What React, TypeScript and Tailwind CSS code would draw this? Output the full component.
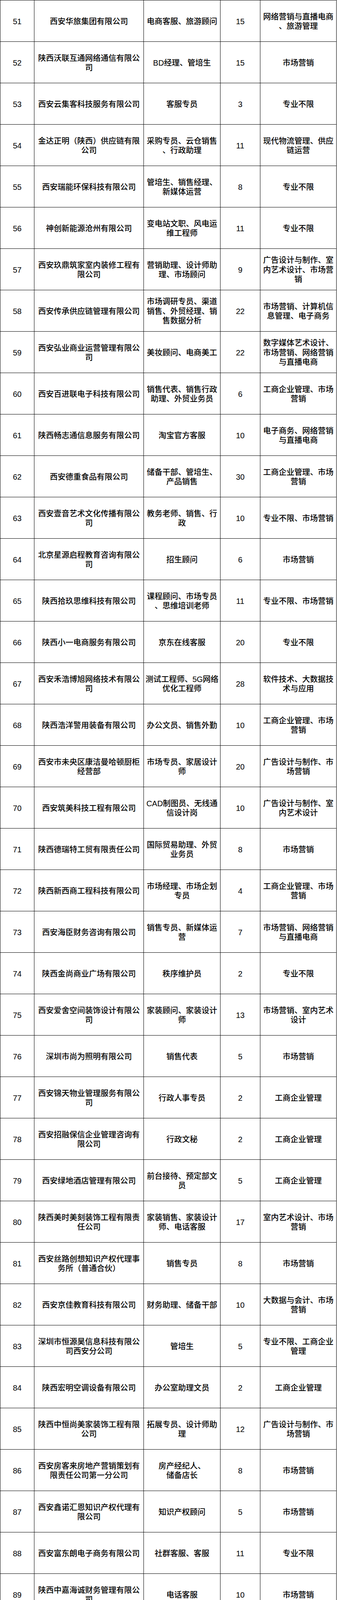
const ROWS: string[][] = [
  ['51', '西安华旅集团有限公司', '电商客服、旅游顾问', '15', '网络营销与直播电商|、旅游管理'],
  ['52', '陕西沃联互通网络通信有限公|司', 'BD经理、管培生', '15', '市场营销'],
  ['53', '西安云集客科技服务有限公司', '客服专员', '3', '专业不限'],
  ['54', '金达正明（陕西）供应链有限|公司', '采购专员、云仓销售|、行政助理', '11', '现代物流管理、供应|链运营'],
  ['55', '西安瑞能环保科技有限公司', '管培生、销售经理、|新媒体运营', '8', '专业不限'],
  ['56', '神创新能源沧州有限公司', '变电站文职、风电运|维工程师', '11', '专业不限'],
  ['57', '西安玖鼎筑家室内装修工程有|限公司', '营销助理、设计师助|理、市场顾问', '9', '广告设计与制作、室|内艺术设计、市场营|销'],
  ['58', '西安传承供应链管理有限公司', '市场调研专员、渠道|销售、外贸经理、销|售数据分析', '22', '市场营销、计算机信|息管理、电子商务'],
  ['59', '西安弘业商业运营管理有限公|司', '美妆顾问、电商美工', '22', '数字媒体艺术设计、|市场营销、网络营销|与直播电商'],
  ['60', '西安百进联电子科技有限公司', '销售代表、销售行政|助理、外贸业务员', '6', '工商企业管理、市场|营销'],
  ['61', '陕西畅志通信息服务有限公司', '淘宝官方客服', '10', '电子商务、网络营销|与直播电商'],
  ['62', '西安德重食品有限公司', '储备干部、管培生、|产品销售', '30', '工商企业管理、市场|营销'],
  ['63', '西安壹音艺术文化传播有限公|司', '教务老师、销售、行|政', '10', '专业不限、市场营销'],
  ['64', '北京星源启程教育咨询有限公|司', '招生顾问', '6', '市场营销'],
  ['65', '陕西拾玖思维科技有限公司', '课程顾问、市场专员|、思维培训老师', '11', '专业不限、市场营销'],
  ['66', '陕西小一电商服务有限公司', '京东在线客服', '20', '专业不限'],
  ['67', '西安禾浩博旭网络技术有限公|司', '测试工程师、5G网络|优化工程师', '28', '软件技术、大数据技|术与应用'],
  ['68', '陕西浩洋警用装备有限公司', '办公文员、销售外勤', '10', '工商企业管理、市场|营销'],
  ['69', '西安市未央区康洁曼哈顿厨柜|经营部', '市场专员、家居设计|师', '20', '广告设计与制作、市|场营销'],
  ['70', '西安筑美科技工程有限公司', 'CAD制图员、无线通|信设计岗', '10', '广告设计与制作、室|内艺术设计'],
  ['71', '陕西德瑞特工贸有限责任公司', '国际贸易助理、外贸|业务员', '8', '市场营销'],
  ['72', '陕西新西商工程科技有限公司', '市场经理、市场企划|专员', '4', '工商企业管理、市场|营销'],
  ['73', '西安海臣财务咨询有限公司', '销售专员、新媒体运|营', '7', '市场营销、网络营销|与直播电商'],
  ['74', '陕西金尚商业广场有限公司', '秩序维护员', '2', '专业不限'],
  ['75', '西安爱舍空间装饰设计有限公|司', '家装顾问、家装设计|师', '13', '市场营销、室内艺术|设计'],
  ['76', '深圳市尚为照明有限公司', '销售代表', '5', '市场营销'],
  ['77', '西安锦天物业管理服务有限公|司', '行政人事专员', '2', '工商企业管理'],
  ['78', '西安招融保信企业管理咨询有|限公司', '行政文秘', '2', '工商企业管理'],
  ['79', '西安绿地酒店管理有限公司', '前台接待、预定部文|员', '5', '工商企业管理'],
  ['80', '陕西美时美刻装饰工程有限责|任公司', '家装销售、家装设计|师、电话客服', '17', '室内艺术设计、市场|营销'],
  ['81', '西安丝路创想知识产权代理事|务所（普通合伙）', '销售专员', '8', '市场营销'],
  ['82', '西安京佳教育科技有限公司', '财务助理、储备干部', '10', '大数据与会计、市场|营销'],
  ['83', '深圳市恒源昊信息科技有限公|司西安分公司', '管培生', '5', '专业不限、工商企业|管理'],
  ['84', '陕西宏明空调设备有限公司', '办公室助理文员', '2', '工商企业管理'],
  ['85', '陕西中恒尚美家装饰工程有限|公司', '拓展专员、设计师助|理', '12', '广告设计与制作、市|场营销'],
  ['86', '西安房客来房地产营销策划有|限责任公司第一分公司', '房产经纪人、|储备店长', '8', '市场营销'],
  ['87', '西安鑫诺汇恩知识产权代理有|限公司', '知识产权顾问', '5', '市场营销'],
  ['88', '西安富东朗电子商务有限公司', '社群客服、客服', '11', '专业不限'],
  ['89', '陕西中嘉海诚财务管理有限公|司', '电话客服', '10', '市场营销'],
  ['90', '沈阳融联商务服务有限公司西|安分公司', '银行管培生', '10', '工商企业管理'],
  ['91', '西安元邦机电设备有限公司', '软件测试员、软件测|试工程师', '8', '软件技术'],
  ['92', '西安市长安区蔚来知梦艺术培|训学校有限公司', '储备干部、客服、课|程顾问、少儿英语老|师、教育顾问', '26', '市场营销、电子商务|、学前教育'],
  ['93', '西安艾蒂芭蕾瑞娜艺术文化交|流有限公司', '课程顾问、演出策划|、舞蹈教师、教务管|理', '24', '数字媒体艺术设计、|市场营销、电子商务|、舞蹈表演'],
  ['94', '陕西中碁令文体育文化传播有|限公司', '学管老师、围棋教师|、课程顾问', '13', '市场营销、学前教育'],
  ['95', '西安海星汽车销售服务有限公|司', '销售专员', '5', '市场营销'],
  ['96', '陕西茂成置业有限公司', '房产销售、置业顾问|、房产经纪人', '15', '市场营销'],
  ['97', '北京恒安卫士保安服务有限公|司', '地铁安检员、地铁列|车巡视员', '25', '高速铁路客运乘务、|城市轨道交通运营管|理'],
  ['98', '西安骏驰房地产咨询有限公司|第七分公司', '人事助理、会计、新|房顾问、房产销售', '33', '大数据与会计、市场|营销'],
  ['99', '江苏华安卫士保安服务有限公|司西安分公司', '地铁安检员', '20', '城市轨道交通运营管|理'],
  ['100', '西安博仁房地产营销策划有限|公司', '客户经理、房产经纪|人、置业顾问', '15', '市场营销'],
];

// line breaks are fixed ("|") so they match the sheet exactly
function Cell({ text }: Readonly<{ text: string }>) {
  return (
    <div className="flex items-center justify-center border-r border-b border-black pt-[3px] text-center">
      <div className="whitespace-nowrap leading-[24.5px]">
        {text.split('|').map((line, i) => (
          <div key={i}>{line}</div>
        ))}
      </div>
    </div>
  );
}

export default function App() {
  return (
    <div className="w-[862px] bg-white">
      <div className="w-[861px] border-t border-l border-black font-['Liberation_Sans','Noto_Sans_CJK_SC',sans-serif] text-[20px] font-medium text-black">
        {ROWS.map((row) => (
          <div key={row[0]} className="grid h-[106px] grid-cols-[87px_280px_196px_102px_195px]">
            {row.map((t, i) => (
              <Cell key={i} text={t} />
            ))}
          </div>
        ))}
      </div>
    </div>
  );
}
